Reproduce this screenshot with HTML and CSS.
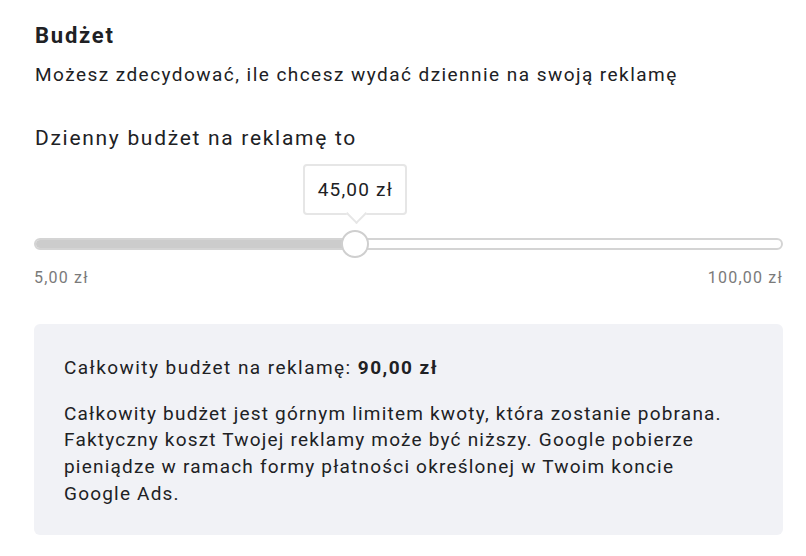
FILE: index.html
```html
<!DOCTYPE html>
<html lang="pl">
<head>
<meta charset="utf-8">
<link rel="stylesheet" href="styles.css">
</head>
<body>
<main class="page">
  <h1 class="title">Budżet</h1>
  <p class="subtitle">Możesz zdecydować, ile chcesz wydać dziennie na swoją reklamę</p>
  <p class="label">Dzienny budżet na reklamę to</p>
  <div class="slider">
    <div class="track">
      <div class="fill" style="width: 42.9%"></div>
    </div>
    <div class="thumb" style="left: 42.9%"></div>
    <div class="tooltip" style="left: 42.9%">45,00 zł</div>
  </div>
  <div class="range">
    <span>5,00 zł</span>
    <span>100,00 zł</span>
  </div>
  <section class="summary">
    <p class="total">Całkowity budżet na reklamę: <strong>90,00 zł</strong></p>
    <p class="note">Całkowity budżet jest górnym limitem kwoty, która zostanie pobrana. Faktyczny koszt Twojej reklamy może być niższy. Google pobierze pieniądze w ramach formy płatności określonej w Twoim koncie <span class="nowrap">Google Ads.</span></p>
  </section>
</main>
</body>
</html>
```

FILE: styles.css
```css
* { box-sizing: border-box; }
html, body { margin: 0; padding: 0; background: #fff; }
body {
  font-family: Roboto, "Noto Sans", Arial, sans-serif;
  color: #202124;
  letter-spacing: 0.075em;
}
.page {
  padding: 24px 23px 0 34px;
  display: flex;
  flex-direction: column;
}
.title {
  margin: 0;
  font-size: 22px;
  line-height: 24px;
  font-weight: 700;
  padding-left: 1px;
  letter-spacing: 0.08em;
}
.subtitle {
  margin: 15px 0 0;
  font-size: 19px;
  line-height: 24px;
  padding-left: 1px;
  letter-spacing: 1.45px;
}
.label {
  margin: 39px 0 0;
  font-size: 21px;
  line-height: 24px;
  padding-left: 1px;
  letter-spacing: 1.7px;
}
.slider {
  position: relative;
  margin-top: 14px;
  height: 94px;
}
.track {
  position: absolute;
  left: 0;
  right: 0;
  top: 74px;
  height: 12px;
  border: 2px solid #d4d4d4;
  border-radius: 6px;
  background: #fff;
  overflow: hidden;
}
.fill {
  height: 100%;
  background: #cccccc;
}
.thumb {
  position: absolute;
  top: 66px;
  width: 28px;
  height: 28px;
  margin-left: -14px;
  border-radius: 50%;
  border: 2px solid #cfcfcf;
  background: #fff;
}
.tooltip {
  position: absolute;
  top: 0;
  width: 104px;
  height: 51px;
  margin-left: -52px;
  border: 2px solid #e6e6e6;
  border-radius: 4px;
  background: #fff;
  font-size: 19px;
  line-height: 47px;
  text-align: center;
}
.tooltip::after {
  content: "";
  position: absolute;
  left: 50%;
  bottom: -8px;
  width: 13px;
  height: 13px;
  margin-left: -6.5px;
  background: #fff;
  border-right: 2px solid #e6e6e6;
  border-bottom: 2px solid #e6e6e6;
  transform: rotate(45deg);
}
.range {
  display: flex;
  justify-content: space-between;
  margin-top: 10px;
  font-size: 16px;
  line-height: 20px;
  color: #7a7a7a;
}
.summary {
  margin-top: 36px;
  background: #f1f2f6;
  border-radius: 6px;
  height: 211px;
  padding: 31px 28px 0 30px;
}
.summary p {
  margin: 0;
  font-size: 19px;
  line-height: 26.7px;
}
.summary .total { letter-spacing: 1.45px; }
.summary strong { font-weight: 700; }
.summary .note { margin-top: 19px; }
.nowrap { white-space: nowrap; }
```
